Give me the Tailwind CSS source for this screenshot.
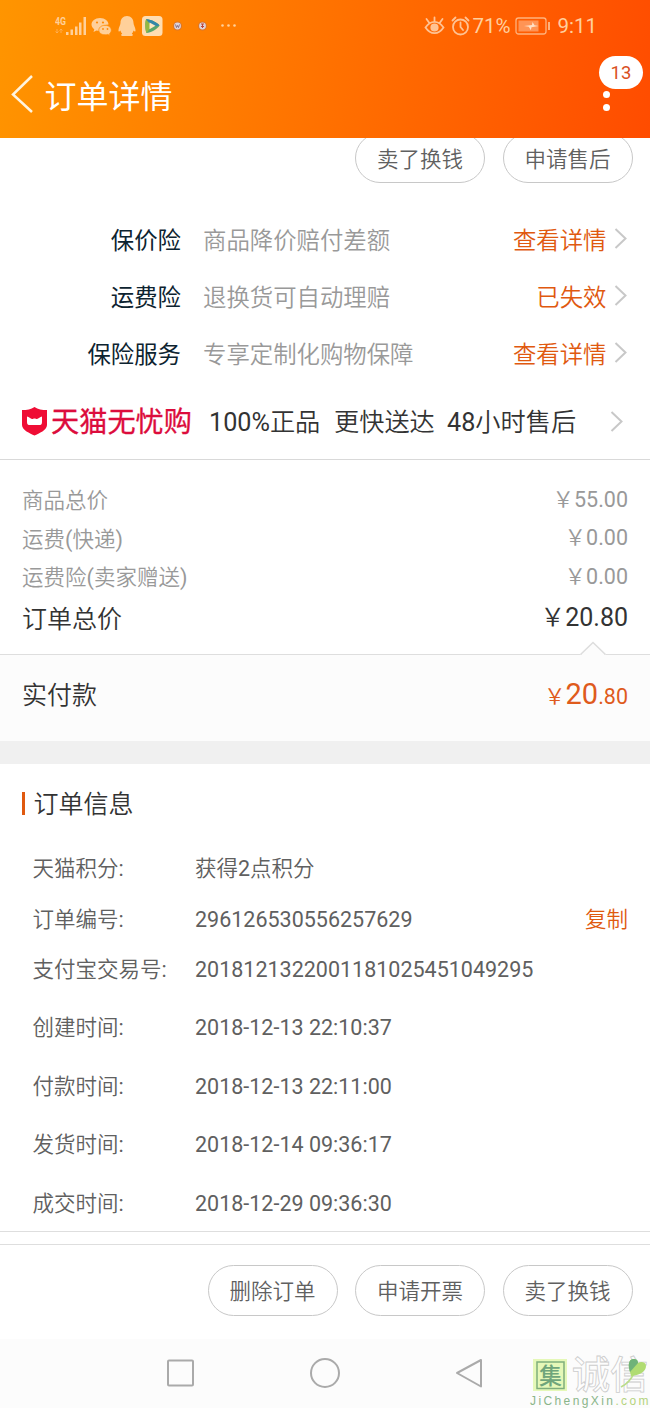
<!DOCTYPE html>
<html lang="zh-CN">
<head>
<meta charset="utf-8">
<title>订单详情</title>
<script src="https://cdn.jsdelivr.net/npm/@tailwindcss/browser@4"></script>
</head>
<body class="w-[650px] h-[1408px] overflow-hidden bg-white flex flex-col font-['Roboto','Noto_Sans_CJK_SC',sans-serif] font-[350] text-[21.5px] leading-none text-[#606060] whitespace-nowrap">
<header class="relative z-10 h-[138px] shrink-0 bg-linear-[100deg,#ff9500_0%,#ff7300_48%,#ff4c00_100%] text-white flex flex-col">
  <div class="h-[52px] flex items-center pl-[55px] pr-[53px] text-[#ffcf9e]">
    <svg width="184" height="32" viewBox="0 0 184 32" fill="#ffd09a">
      <text x="0" y="15" font-family="Roboto" font-size="10.500" font-weight="700" textLength="11" lengthAdjust="spacingAndGlyphs">4G</text>
      <path d="M2 19v4m-1.500-1.500L2 23l1.500-1.500M6 23v-4m-1.500 1.500L6 19l1.500 1.500" stroke="#ffb45f" stroke-width=".8" fill="none"/>
      <path d="M11 22h2.500v3H11zM15.500 19.500H18V25h-2.500zM20 16.500h2.500V25H20zM24 12.500h2.500V25H24zM28.500 7H31v18h-2.500z"/>
      <path d="M45 8c5 0 8.500 3 8.500 6.500-5 0-8.500 3-8 6.500-1.500.2-3 0-4-.4L38.500 22l.8-2.700C37.500 18 36.500 16.400 36.500 14.500 36.500 11 40 8 45 8z"/>
      <path d="M50 15.300c3.800 0 6.300 2.300 6.300 4.900 0 1.400-.7 2.600-1.800 3.500l.5 1.900-2.200-1.200c-.8.3-1.600.4-2.500.4-4 0-6.500-2-6.500-4.600s2.500-4.900 6.200-4.900z" stroke="#ff8d08" stroke-width=".8"/>
      <g fill="#ff8b0a"><circle cx="42" cy="12.500" r="1.100"/><circle cx="48" cy="12.500" r="1.100"/><circle cx="48" cy="19" r=".9"/><circle cx="52.500" cy="19" r=".9"/></g>
      <path d="M72 6c4 0 6.500 3 6.500 7 0 2 1.800 4 2 7 .1 2-.8 2-2 .6-.3 1.500-1 2.500-1.700 3.200 2 1 1.200 2.200-.8 2.200H68c-2 0-2.800-1.200-.8-2.200-.7-.7-1.400-1.700-1.700-3.200-1.200 1.400-2.100 1.400-2-.6.2-3 2-5 2-7 0-4 2.500-7 6.500-7z"/>
      <rect x="87" y="6" width="20.500" height="20" rx="3.500" fill="#ffddb2"/>
      <path d="M91 9.500c3-1 12 3.500 13.500 6-1.500 3-9 7.500-13 7.500-1.500-3-1.500-11-.5-13.500z" fill="#5ba66a"/>
      <path d="M91 9.500c3-1 12 3.500 13.500 6L96 17z" fill="#3487a8"/><path d="M91 9.500c-1 3-1 10 .5 13.500L97 16z" fill="#94b842"/>
      <path d="M94.500 12.500l6 3.300-6 3.500z" fill="#ffe9c0"/>
      <circle cx="122.500" cy="16" r="4.500" fill="#d8762d"/><circle cx="122.500" cy="16" r="3.400" fill="#ddd2dc"/><path d="M120.500 14.500l1 3 1-2 1 2 1-3" fill="none" stroke="#765c72" stroke-width=".8"/>
      <circle cx="147.500" cy="16" r="4.500" fill="#d8762d"/><circle cx="147.500" cy="16" r="3.400" fill="#ddd2dc"/><path d="M146 14h3m-1.500 0v4m-1.500-1.500h3" stroke="#bd473b" stroke-width="1"/>
      <circle cx="167.500" cy="15.500" r="1.300"/><circle cx="173.500" cy="15.500" r="1.300"/><circle cx="179.500" cy="15.500" r="1.300"/>
    </svg>
    <div class="ml-auto flex items-center text-[20.5px] font-normal">
      <svg width="50" height="32" viewBox="0 0 50 32" fill="none" stroke="#ffc394" stroke-width="1.800" stroke-linecap="round">
        <path d="M4.500 17.500c5-7.500 13-7.500 18 0-5 7.500-13 7.500-18 0zM13.500 11V7.500M8 12.500L5.500 9M19 12.500l2.500-3.500"/><circle cx="13.500" cy="17.500" r="3.200" fill="#ffc394"/><circle cx="39.500" cy="17" r="7.500"/><path d="M39.500 12.500V17l2.500 3M31.500 10.500l3-3M47.500 10.500l-3-3"/>
      </svg>
      <span class="ml-[1px] w-[38px]">71%</span>
      <svg class="ml-[5px]" width="36" height="32" viewBox="0 0 36 32"><rect x="1" y="8" width="30" height="16" rx="2.500" fill="none" stroke="#ffb27c" stroke-width="1.300"/><path d="M3.500 10.500h20v11h-20z" fill="#ff9455"/><path d="M9 16l8-1 .5-3 2 3.200 4 .8-7 1.300-.7 3-2-3.500z" fill="#ffe0c5"/><path d="M34 12v8" stroke="#ffb27c" stroke-width="2"/></svg>
      <span class="ml-[6px]">9:11</span>
    </div>
  </div>
  <div class="flex-1 flex items-center pl-[10px]">
    <svg width="24" height="42" viewBox="0 0 24 42" fill="none" stroke="#fff4df" stroke-width="2.500"><path d="M22 2L3 20.500 22 38"/></svg>
    <h1 class="ml-[10.5px] mt-[4px] text-[32px] font-normal">订单详情</h1>
  </div>
  <div class="absolute left-[603px] top-[91px] flex flex-col gap-[6px]"><i class="size-[7px] rounded-full bg-white"></i><i class="size-[7px] rounded-full bg-white"></i></div>
  <span class="absolute left-[599px] top-[56px] w-[44px] h-[33px] pt-[2px] rounded-full bg-white text-[#d9501e] text-[18.5px] font-normal flex items-center justify-center">13</span>
</header>
<div class="flex justify-end gap-[17.5px] pr-[17.5px] -mt-[5px] h-[50px] shrink-0">
  <span class="w-[130px] border border-[#c8c8c8] rounded-full flex items-center justify-center pt-[3px]">卖了换钱</span>
  <span class="w-[130px] border border-[#c8c8c8] rounded-full flex items-center justify-center pt-[3px]">申请售后</span>
</div>
<section class="mt-[30px] shrink-0 text-[23.4px]">
  <div class="h-[57px] flex items-center"><b class="w-[181px] text-right font-normal text-[#0d2330]">保价险</b><span class="ml-[22px] text-[#999]">商品降价赔付差额</span><span class="ml-auto text-[#e0590f]">查看详情</span><svg class="ml-[7px] mr-[23.5px] mb-[5px]" width="13" height="22" viewBox="0 0 13 22" fill="none" stroke="#c8c8c8" stroke-width="2"><path d="M1.500 1l10 9.500-10 9.500"/></svg></div>
  <div class="h-[57px] flex items-center"><b class="w-[181px] text-right font-normal text-[#0d2330]">运费险</b><span class="ml-[22px] text-[#999]">退换货可自动理赔</span><span class="ml-auto text-[#e0590f]">已失效</span><svg class="ml-[7px] mr-[23.5px] mb-[5px]" width="13" height="22" viewBox="0 0 13 22" fill="none" stroke="#c8c8c8" stroke-width="2"><path d="M1.500 1l10 9.500-10 9.500"/></svg></div>
  <div class="h-[57px] flex items-center"><b class="w-[181px] text-right font-normal text-[#0d2330]">保险服务</b><span class="ml-[22px] text-[#999]">专享定制化购物保障</span><span class="ml-auto text-[#e0590f]">查看详情</span><svg class="ml-[7px] mr-[23.5px] mb-[5px]" width="13" height="22" viewBox="0 0 13 22" fill="none" stroke="#c8c8c8" stroke-width="2"><path d="M1.500 1l10 9.500-10 9.500"/></svg></div>
</section>
<section class="h-[76px] shrink-0 border-b border-[#d9d9d9] flex items-center pl-[21px] text-[25.2px] text-[#333]">
  <svg class="mb-[2px]" width="27" height="30" viewBox="0 0 27 30"><path d="M13.500 1C17 3.500 21 4 26 4v15c0 5-8 8.500-12.500 10.500C9 27.500 1 24 1 19V4c5 0 9-.5 12.500-3z" fill="#ef0d35"/><path d="M6 10.500c2 0 3.500 2.500 5 2.500 1 0 1.500-.5 2.500-.5s1.500.5 2.500.5c1.500 0 3-2.500 5-2.500v5.500c0 2.500-1 3-3 3H9c-2 0-3-.5-3-3z" fill="#fff"/></svg>
  <strong class="ml-[3px] mt-[3px] w-[141px] text-[28.2px] font-normal text-[#dc0c3c] [-webkit-text-stroke:0.3px_#dc0c3c]">天猫无忧购</strong>
  <span class="ml-[17px] mt-[2px] w-[125px]"><span class="font-normal">100%</span>正品</span><span class="mt-[2px] w-[113px]">更快送达</span><span class="mt-[2px]"><span class="font-normal">48</span>小时售后</span>
  <svg class="ml-auto mr-[27.5px]" width="13" height="22" viewBox="0 0 13 22" fill="none" stroke="#c8c8c8" stroke-width="2"><path d="M1.500 1l10 9.500-10 9.500"/></svg>
</section>
<section class="h-[194px] shrink-0 px-[22px] pt-[20px] text-[#999] relative">
  <div class="h-[39px] flex items-center justify-between"><span class="pt-[3px]">商品总价</span><span>￥<span class="font-normal">55.00</span></span></div>
  <div class="h-[38px] flex items-center justify-between"><span class="pt-[3px]">运费<span class="font-normal">(</span>快递<span class="font-normal">)</span></span><span>￥<span class="font-normal">0.00</span></span></div>
  <div class="h-[39px] flex items-center justify-between"><span class="pt-[3px]">运费险<span class="font-normal">(</span>卖家赠送<span class="font-normal">)</span></span><span>￥<span class="font-normal">0.00</span></span></div>
  <div class="h-[43px] flex items-center justify-between text-[25px] text-[#333]"><span class="pt-[3px]">订单总价</span><span>￥<span class="font-normal">20.80</span></span></div>
  <svg class="absolute z-10 right-[44px] bottom-[-1px]" width="26" height="14" viewBox="0 0 26 14"><path d="M0 13.500h1.500L13 1.500l11.500 12H26V14H0z" fill="#fcfcfc"/><path d="M.5 13.500L13 1.500l12.500 12" fill="none" stroke="#ddd" stroke-width="1.500"/></svg>
</section>
<section class="h-[87px] shrink-0 px-[22px] pb-[6px] border-t border-[#dedede] bg-[#fcfcfc] flex items-center justify-between">
  <span class="text-[25px] text-[#333]">实付款</span>
  <span class="text-[#df5b1c] pb-[2px]">￥<span class="text-[29px] font-normal">20</span><span class="font-normal">.80</span></span>
</section>
<div class="h-[23px] shrink-0 bg-[#f0f0f0]"></div>
<section class="h-[468px] shrink-0 border-b border-[#dedede] pl-[22px] pr-[22px] pt-[19px]">
  <h2 class="h-[42px] flex items-center text-[25px] text-[#333] font-[350]"><i class="w-[3px] h-[23px] bg-[#e0590f] mr-[8.5px] mb-[2px]"></i>订单信息</h2>
  <div class="pl-[10.5px] pt-[18px]">
    <div class="h-[51px] flex items-center"><span class="w-[162.5px]">天猫积分<span class="font-normal">:</span></span><span>获得<span class="font-normal">2</span>点积分</span></div>
    <div class="h-[51px] flex items-center"><span class="w-[162.5px]">订单编号<span class="font-normal">:</span></span><span class="font-normal">296126530556257629</span><span class="ml-auto text-[#e0590f]">复制</span></div>
    <div class="h-[50px] flex items-center"><span class="w-[162.5px]">支付宝交易号<span class="font-normal">:</span></span><span class="font-normal">2018121322001181025451049295</span></div>
    <div class="h-[66px] flex items-center"><span class="w-[162.5px]">创建时间<span class="font-normal">:</span></span><span class="font-normal">2018-12-13 22:10:37</span></div>
    <div class="h-[51px] flex items-center"><span class="w-[162.5px]">付款时间<span class="font-normal">:</span></span><span class="font-normal">2018-12-13 22:11:00</span></div>
    <div class="h-[66px] flex items-center"><span class="w-[162.5px]">发货时间<span class="font-normal">:</span></span><span class="font-normal">2018-12-14 09:36:17</span></div>
    <div class="h-[51px] flex items-center"><span class="w-[162.5px]">成交时间<span class="font-normal">:</span></span><span class="font-normal">2018-12-29 09:36:30</span></div>
  </div>
</section>
<div class="h-[12px] shrink-0"></div>
<footer class="h-[95px] shrink-0 border-t border-[#dedede] flex justify-end gap-[17.5px] pr-[17.5px] pt-[20px]">
  <span class="w-[130px] h-[51px] border border-[#c8c8c8] rounded-full flex items-center justify-center pt-[3px]">删除订单</span>
  <span class="w-[130px] h-[51px] border border-[#c8c8c8] rounded-full flex items-center justify-center pt-[3px]">申请开票</span>
  <span class="w-[130px] h-[51px] border border-[#c8c8c8] rounded-full flex items-center justify-center pt-[3px]">卖了换钱</span>
</footer>
<nav class="relative h-[69px] shrink-0 bg-[#fcfcfc] flex items-center pl-[166px]">
  <svg width="318" height="32" viewBox="0 0 318 32" fill="none" stroke="#aaa" stroke-width="2"><rect x="2" y="2.500" width="25" height="25" rx="1"/><circle cx="159" cy="15" r="14"/><path d="M315 2v26.500L291 15z" stroke-linejoin="round"/></svg>
  <svg class="absolute left-[528px] top-[12px] overflow-visible" width="122" height="57" viewBox="0 -6 122 57" font-family="Noto Sans CJK SC">
    <rect x="5" y="2" width="34" height="32" fill="#e5f8b8"/><rect x="9" y="5" width="27" height="26.500" fill="none" stroke="#7fae7c" stroke-width="1.500"/>
    <text x="11" y="27" font-size="23" font-weight="500" fill="#6fa57b">集</text>
    <text x="44" y="31" font-size="38" font-weight="500" fill="#fdfdfd" stroke="#ccc" stroke-width=".8">诚信</text>
    <path d="M93 30c6-3 10-7 13-14" fill="none" stroke="#b9dd8a" stroke-width="1.800"/><path d="M102 15c-2-6-2-12 3-13 4-.5 5 2 5 4 3-2 8-1 8 3 0 5-5 9-15 10z" fill="#b0dc72"/><path d="M102 15c-2-6-2-12 3-13 4-.5 5 2 5 4z" fill="#6fb279"/>
    <text x="2" y="48" font-family="Liberation Sans" font-size="12" letter-spacing="2.400" fill="#8ab58a">JiChengXin<tspan fill="#b4d37c">.com</tspan></text>
  </svg>
</nav>
</body>
</html>
